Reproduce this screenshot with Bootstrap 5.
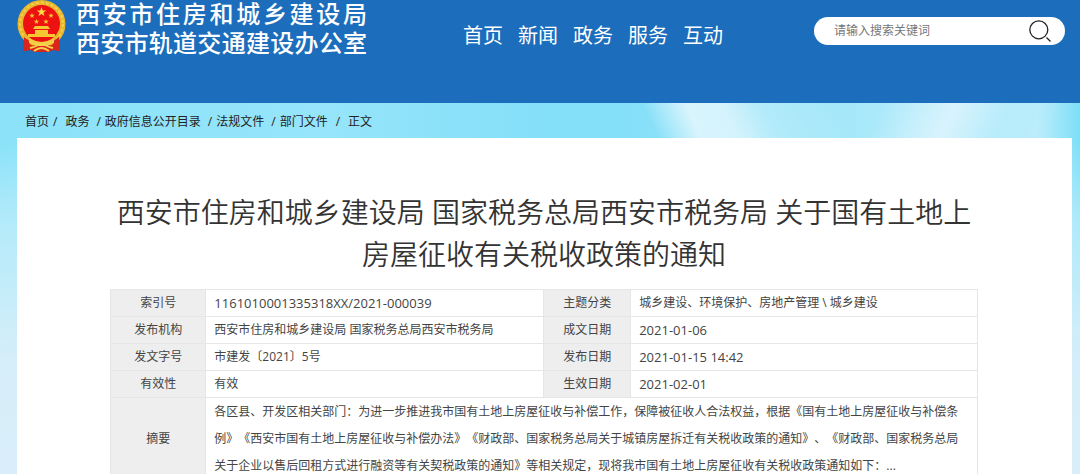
<!DOCTYPE html>
<html lang="zh-CN">
<head>
<meta charset="utf-8">
<meta name="viewport" content="width=device-width, initial-scale=1">
<title>西安市住房和城乡建设局</title>
<link rel="stylesheet" href="https://cdn.jsdelivr.net/npm/bootstrap@5.3.0/dist/css/bootstrap.min.css">
<style>
body{
  font-family:"Open Sans","Noto Sans CJK SC",sans-serif;font-size:12px;color:#444;
  text-spacing-trim:space-all;
  background:
    linear-gradient(180deg,#d4effb00 0,#d4effb00 40px,#c8effbaa 120px,#d6eef9 260px,#dceefa 100%) 0 103px no-repeat,
    linear-gradient(115deg,transparent 10%,#d8f3fd 42%,#b8ecfb 66%,transparent 90%) 860px 103px/200px 60px no-repeat,
    linear-gradient(65deg,transparent 26%,#d8f4fd 42%,#d4f3fc 56%,#b4ebfa 70%,#a2e7f900 100%) 600px 103px/240px 60px no-repeat,
    linear-gradient(90deg,#8be2f9 0,#96e5fb 30%,#84dff8 50%,#84dff8 58%,#a2e7f9 76%,#b6ecfb 90%,#bcedfb 96%,#7ddff8 100%);
}
.site-header{background:#1c6dbc;min-height:103px;padding:0 15px 0 17px}
.brand-link{gap:10px}
.brand-text{width:291px;font-family:"Liberation Sans","Noto Sans CJK SC",sans-serif;font-size:24px;font-weight:500;line-height:29px;color:#fff}
.brand-text span{display:block;text-align-last:justify;white-space:nowrap}
.main-nav{gap:15px;margin:21px 0 0 96px;font-size:20px;line-height:30px}
.search-box{width:251px;height:28px;margin-top:17px;padding:0 14px 0 20px}
.search-box input{font-size:12px;color:#555}
.search-box input::placeholder{color:#777;opacity:1}
.crumbs{padding:9px 25px 7px;line-height:19px}
.crumbs a,.crumbs li{color:#222}
.crumbs li+li::before{content:"/";padding:0 4px 0 7px}
.crumbs li+.wide::before{padding:0 8px 0 4px}
.crumbs .wide:last-child::before{padding-left:8px}
.panel{margin:0 8px 0 17px;padding:53px 94px 0 93px}
.doc-title{font-size:28px;line-height:42px;font-weight:350;color:#333;margin-bottom:14px}
.info{margin:0;table-layout:fixed;border-color:#e6e6e6}
.info th,.info td{padding:0 8px;line-height:26px;border:1px solid #e6e6e6;vertical-align:middle;background:#fff;color:#444}
.info th{background:#eee;font-weight:400;text-align:center}
.info .num{font-size:13px}
.info .summary{line-height:27px}
</style>
</head>
<body>
<header class="site-header d-flex align-items-start">
  <a href="#" class="brand-link d-flex align-items-start text-decoration-none">
    <svg width="49" height="52" viewBox="0 0 49 52" aria-hidden="true">
      <path d="M7 37L6 51l8-1 4 2h14l4-2 7 1V37z" fill="#d9251c"/>
      <circle cx="24.500" cy="24" r="24" fill="#e8b62c"/>
      <circle cx="24.500" cy="24" r="21.500" fill="none" stroke="#f3d04a" stroke-width="2" stroke-dasharray="3 2"/>
      <circle cx="24.500" cy="23.500" r="18.500" fill="#ee1111"/>
      <path d="M24.500 7l1.200 3.400h3.600l-2.900 2.200 1.100 3.500-3-2.100-3 2.100 1.100-3.500-2.900-2.200h3.600z" fill="#ffdf45"/>
      <g fill="#f7c733">
        <path id="s" d="M15 13l.7 1.800h2l-1.600 1.200.6 2-1.700-1.200-1.700 1.200.6-2-1.600-1.200h2z"/>
        <use href="#s" x="19"/><use href="#s" x="4.500" y="6"/><use href="#s" x="14" y="6"/>
        <path d="M18 26h13l2 3H16zM18 30h13v4H18zM11 34h27v3H11z"/>
      </g>
      <path d="M7 37L6 51l6-1 2-8zM42 37l1 14-6-1-2-8z" fill="#d9251c"/>
      <path d="M12 38q6 4 12.500 4T37 38v5q-6 4-12.500 1-6.500 3-12.500-1z" fill="#f3cd45"/>
      <path d="M12 44q6 3 12.500 1 6.500 2 12.500-1v5q-6 3-12.500 0-6.500 3-12.500 0z" fill="#df2618"/>
      <path d="M13 48q5-1 8-3h7q3 2 8 3M17 51q4-3 7.500-3t7.500 3" fill="none" stroke="#f5d34f" stroke-width="2"/>
    </svg>
    <span class="brand-text"><span>西安市住房和城乡建设局</span><span>西安市轨道交通建设办公室</span></span>
  </a>
  <nav class="main-nav d-flex">
    <a class="text-white text-decoration-none" href="#">首页</a>
    <a class="text-white text-decoration-none" href="#">新闻</a>
    <a class="text-white text-decoration-none" href="#">政务</a>
    <a class="text-white text-decoration-none" href="#">服务</a>
    <a class="text-white text-decoration-none" href="#">互动</a>
  </nav>
  <form class="search-box d-flex align-items-center bg-white rounded-pill ms-auto">
    <input class="border-0 bg-transparent p-0 flex-grow-1 w-100" type="text" placeholder="请输入搜索关键词" aria-label="请输入搜索关键词">
    <button class="btn p-0 border-0 d-flex" type="button" aria-label="搜索">
      <svg width="22" height="22" viewBox="0 0 22 22" fill="none" stroke="#222" stroke-width="1.300"><circle cx="9.800" cy="9.800" r="9"/><path d="M17.500 17.500l4 4"/></svg>
    </button>
  </form>
</header>
<nav aria-label="当前位置">
  <ol class="crumbs list-unstyled d-flex flex-wrap mb-0">
    <li><a class="text-decoration-none" href="#">首页</a></li>
    <li class="wide"><a class="text-decoration-none" href="#">政务</a></li>
    <li><a class="text-decoration-none" href="#">政府信息公开目录</a></li>
    <li><a class="text-decoration-none" href="#">法规文件</a></li>
    <li><a class="text-decoration-none" href="#">部门文件</a></li>
    <li class="wide">正文</li>
  </ol>
</nav>
<main class="panel bg-white">
  <h1 class="doc-title text-center">西安市住房和城乡建设局 国家税务总局西安市税务局 关于国有土地上房屋征收有关税收政策的通知</h1>
  <table class="info table">
    <colgroup><col style="width:11%"><col style="width:39%"><col style="width:10%"><col style="width:40%"></colgroup>
    <tbody>
    <tr><th scope="row">索引号</th><td class="num">1161010001335318XX/2021-000039</td><th scope="row">主题分类</th><td>城乡建设、环境保护、房地产管理 \ 城乡建设</td></tr>
    <tr><th scope="row">发布机构</th><td>西安市住房和城乡建设局 国家税务总局西安市税务局</td><th scope="row">成文日期</th><td class="num">2021-01-06</td></tr>
    <tr><th scope="row">发文字号</th><td>市建发〔2021〕5号</td><th scope="row">发布日期</th><td class="num">2021-01-15 14:42</td></tr>
    <tr><th scope="row">有效性</th><td>有效</td><th scope="row">生效日期</th><td class="num">2021-02-01</td></tr>
    <tr><th scope="row">摘要</th><td class="summary" colspan="3">各区县、开发区相关部门：为进一步推进我市国有土地上房屋征收与补偿工作，保障被征收人合法权益，根据《国有土地上房屋征收与补偿条例》《西安市国有土地上房屋征收与补偿办法》《财政部、国家税务总局关于城镇房屋拆迁有关税收政策的通知》、《财政部、国家税务总局关于企业以售后回租方式进行融资等有关契税政策的通知》等相关规定，现将我市国有土地上房屋征收有关税收政策通知如下：...</td></tr>
    </tbody>
  </table>
</main>
<script src="https://cdn.jsdelivr.net/npm/bootstrap@5.3.0/dist/js/bootstrap.bundle.min.js"></script>
</body>
</html>
